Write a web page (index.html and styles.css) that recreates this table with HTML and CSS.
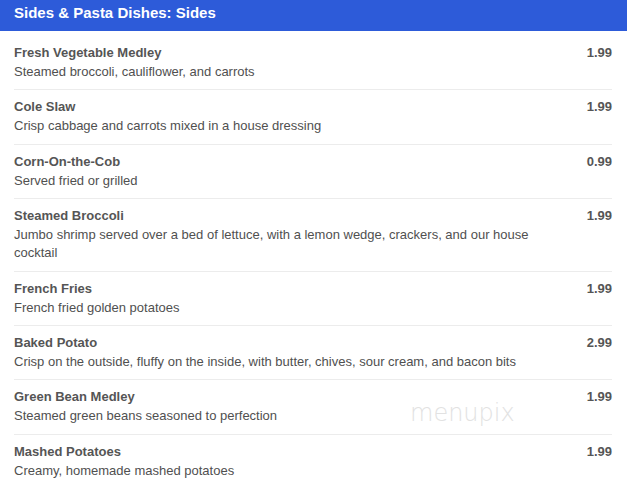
FILE: index.html
```html
<!DOCTYPE html>
<html>
<head>
<meta charset="utf-8">
<link rel="stylesheet" href="styles.css">
</head>
<body>
<div class="page">
  <div class="header">Sides &amp; Pasta Dishes: Sides</div>
  <ul class="menu">
    <li class="item"><div class="info"><div class="name">Fresh Vegetable Medley</div><div class="desc">Steamed broccoli, cauliflower, and carrots</div></div><div class="price">1.99</div></li>
    <li class="item"><div class="info"><div class="name">Cole Slaw</div><div class="desc">Crisp cabbage and carrots mixed in a house dressing</div></div><div class="price">1.99</div></li>
    <li class="item"><div class="info"><div class="name">Corn-On-the-Cob</div><div class="desc">Served fried or grilled</div></div><div class="price">0.99</div></li>
    <li class="item"><div class="info"><div class="name">Steamed Broccoli</div><div class="desc">Jumbo shrimp served over a bed of lettuce, with a lemon wedge, crackers, and our house cocktail</div></div><div class="price">1.99</div></li>
    <li class="item"><div class="info"><div class="name">French Fries</div><div class="desc">French fried golden potatoes</div></div><div class="price">1.99</div></li>
    <li class="item"><div class="info"><div class="name">Baked Potato</div><div class="desc">Crisp on the outside, fluffy on the inside, with butter, chives, sour cream, and bacon bits</div></div><div class="price">2.99</div></li>
    <li class="item"><div class="info"><div class="name">Green Bean Medley</div><div class="desc">Steamed green beans seasoned to perfection</div></div><div class="price">1.99</div></li>
    <li class="item"><div class="info"><div class="name">Mashed Potatoes</div><div class="desc">Creamy, homemade mashed potatoes</div></div><div class="price">1.99</div></li>
  </ul>
  <div class="watermark">menupix</div>
</div>
</body>
</html>
```
FILE: styles.css
```css
* { box-sizing: border-box; }
html, body { margin: 0; padding: 0; background: #fff; }
body { font-family: "Liberation Sans", Arial, sans-serif; color: #555; }
.page { position: relative; width: 627px; height: 484px; overflow: hidden; }
.header {
  height: 31px;
  background: #2d5bd9;
  color: #fff;
  font-weight: bold;
  font-size: 15px;
  line-height: 26px;
  padding-left: 14px;
}
.menu { list-style: none; margin: 5px 15px 0 14px; padding: 0; }
.item {
  display: flex;
  align-items: flex-start;
  justify-content: space-between;
  padding: 7px 0 8.4px;
  border-bottom: 1px solid #ececec;
}
.item:last-child { border-bottom: none; }
.info { flex: 1; padding-right: 30px; }
.name { font-weight: bold; font-size: 13px; line-height: 19px; color: #555; }
.desc { font-size: 13px; line-height: 18px; margin-top: 1px; color: #505050; }
.price { font-weight: bold; font-size: 13px; line-height: 19px; color: #555; }
.watermark {
  position: absolute;
  left: 410px;
  top: 399px;
  font-family: "DejaVu Sans", sans-serif;
  font-weight: 200;
  font-size: 24px;
  color: #e2e2e2;
}
```
